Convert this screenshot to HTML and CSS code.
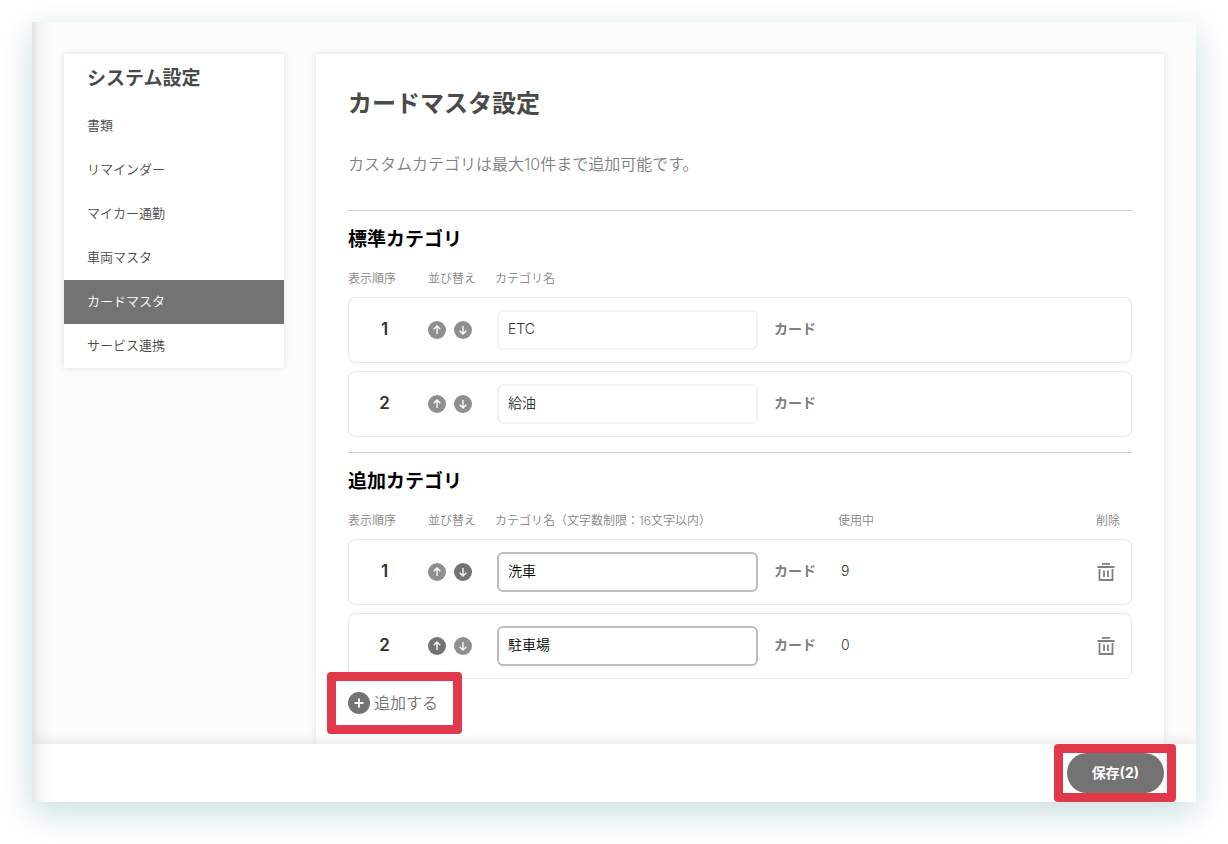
FILE: index.html
```html
<!DOCTYPE html>
<html lang="ja">
<head>
<meta charset="utf-8">
<meta name="viewport" content="width=device-width, initial-scale=1">
<title>カードマスタ設定</title>
<link rel="stylesheet" href="styles.css">
</head>
<body>
<svg class="sprite" aria-hidden="true">
  <symbol id="up" viewBox="0 0 18 18"><circle cx="9" cy="9" r="9" fill="currentColor"/><path d="M9 13V5.3M5.7 8.2 9 5l3.300 3.200" fill="none" stroke="#fff" stroke-width="1.300"/></symbol>
  <symbol id="down" viewBox="0 0 18 18"><circle cx="9" cy="9" r="9" fill="currentColor"/><path d="M9 5v7.700M5.700 9.800 9 13l3.300-3.200" fill="none" stroke="#fff" stroke-width="1.300"/></symbol>
  <symbol id="trash" viewBox="0 0 18 20"><path d="M5 1.800h8M0.500 5h17M2.500 7v11h13V7M7 8.500v6.500M11 8.500v6.500" fill="none" stroke="currentColor" stroke-width="1.800"/></symbol>
</svg>
<div class="window">
  <div class="body">
    <nav class="side" aria-labelledby="side-title">
      <h2 class="side-title" id="side-title">システム設定</h2>
      <ul class="menu">
        <li><a class="item" href="#">書類</a></li>
        <li><a class="item" href="#">リマインダー</a></li>
        <li><a class="item" href="#">マイカー通勤</a></li>
        <li><a class="item" href="#">車両マスタ</a></li>
        <li><a class="item active" href="#" aria-current="page">カードマスタ</a></li>
        <li><a class="item" href="#">サービス連携</a></li>
      </ul>
    </nav>
    <main class="panel">
      <h1 class="title">カードマスタ設定</h1>
      <p class="lead">カスタムカテゴリは最大10件まで追加可能です。</p>

      <section class="group">
        <h2 class="heading">標準カテゴリ</h2>
        <table class="grid">
          <thead><tr><th class="c-no">表示順序</th><th class="c-sort">並び替え</th><th class="c-name">カテゴリ名</th><th class="c-unit"></th><th></th><th class="c-del"></th></tr></thead>
          <tbody>
            <tr>
              <td class="no">1</td>
              <td><div class="sort"><button class="arrow" disabled aria-label="上へ"><svg><use href="#up"/></svg></button><button class="arrow" disabled aria-label="下へ"><svg><use href="#down"/></svg></button></div></td>
              <td class="name"><input class="field" type="text" value="ETC" aria-label="カテゴリ名" disabled></td>
              <td class="unit">カード</td><td></td><td></td>
            </tr>
            <tr>
              <td class="no">2</td>
              <td><div class="sort"><button class="arrow" disabled aria-label="上へ"><svg><use href="#up"/></svg></button><button class="arrow" disabled aria-label="下へ"><svg><use href="#down"/></svg></button></div></td>
              <td class="name"><input class="field" type="text" value="給油" aria-label="カテゴリ名" disabled></td>
              <td class="unit">カード</td><td></td><td></td>
            </tr>
          </tbody>
        </table>
      </section>

      <section class="group">
        <h2 class="heading">追加カテゴリ</h2>
        <table class="grid">
          <thead><tr><th class="c-no">表示順序</th><th class="c-sort">並び替え</th><th class="c-name">カテゴリ名（文字数制限：16文字以内）</th><th class="c-unit"></th><th>使用中</th><th class="c-del">削除</th></tr></thead>
          <tbody>
            <tr>
              <td class="no">1</td>
              <td><div class="sort"><button class="arrow" disabled aria-label="上へ"><svg><use href="#up"/></svg></button><button class="arrow" aria-label="下へ"><svg><use href="#down"/></svg></button></div></td>
              <td class="name"><input class="field" type="text" value="洗車" maxlength="16" aria-label="カテゴリ名"></td>
              <td class="unit">カード</td><td class="used">9</td>
              <td><button class="trash" aria-label="削除"><svg><use href="#trash"/></svg></button></td>
            </tr>
            <tr>
              <td class="no">2</td>
              <td><div class="sort"><button class="arrow" aria-label="上へ"><svg><use href="#up"/></svg></button><button class="arrow" disabled aria-label="下へ"><svg><use href="#down"/></svg></button></div></td>
              <td class="name"><input class="field" type="text" value="駐車場" maxlength="16" aria-label="カテゴリ名"></td>
              <td class="unit">カード</td><td class="used">0</td>
              <td><button class="trash" aria-label="削除"><svg><use href="#trash"/></svg></button></td>
            </tr>
          </tbody>
        </table>
        <button class="add marked"><svg viewBox="0 0 22 22" aria-hidden="true"><circle cx="11" cy="11" r="11" fill="#737373"/><path d="M11 6.500v9M6.500 11h9" stroke="#fff" stroke-width="1.800"/></svg>追加する</button>
      </section>
    </main>
  </div>
  <footer class="bar"><button class="save marked">保存(2)</button></footer>
</div>
</body>
</html>
```
FILE: styles.css
```css
* { box-sizing: border-box; }

body {
  margin: 0;
  padding: 22px 32px 42px;
  background: #fff;
  color: #4a4a4a;
  font-family: Inter, "Noto Sans CJK JP", sans-serif;
  font-weight: 350;
  font-size: 14px;
}

button, input { font: inherit; }
button { border: 0; padding: 0; background: none; color: inherit; cursor: pointer; }
.sprite { display: none; }

.window {
  position: relative;
  display: flex;
  flex-direction: column;
  min-height: calc(100vh - 64px);
  background: #fcfcfc;
  box-shadow: 0 10px 32px rgba(31, 119, 135, 0.25);
}

/* soft inner shade along the left edge */
.window::after {
  content: "";
  position: absolute;
  inset: 0 auto 0 0;
  width: 20px;
  background: linear-gradient(to right, rgba(0, 0, 0, 0.1), rgba(0, 0, 0, 0.03) 40%, transparent);
  pointer-events: none;
}

.body {
  flex: 1;
  display: flex;
  align-items: stretch;
  gap: 32px;
  padding: 32px 32px 0;
}

.side, .panel {
  background: #fff;
  box-shadow: 0 0 6px rgba(0, 0, 0, 0.12);
}

.side { flex: 0 0 220px; align-self: flex-start; }
.side-title { margin: 0; padding: 0 23px; font-size: 19px; line-height: 50px; }
.menu { list-style: none; margin: 0; padding: 0; }
.item {
  display: block;
  padding: 0 23px 2px;
  font-size: 13px;
  line-height: 42px;
  color: #4a4a4a;
  text-decoration: none;
}
.item.active { background: #737373; color: #fff; }

.panel { flex: 1; min-width: 0; padding: 32px; padding-bottom: 10px; }
.title { margin: 0; font-size: 24px; line-height: 36px; }
.lead { margin: 30px 0 34px; font-size: 16px; line-height: 24px; color: #808080; }

.group { border-top: 1px solid #ccc; padding: 15px 0 7px; }
.heading { margin: 0 0 7px; font-size: 19px; line-height: 28px; color: #000; }

.grid {
  width: 100%;
  table-layout: fixed;
  border-collapse: separate;
  border-spacing: 0 8px;
}
.grid th {
  padding: 0;
  height: 20px;
  font-size: 12px;
  font-weight: inherit;
  line-height: 20px;
  text-align: left;
  white-space: nowrap;
  color: #858585;
}
.c-no { width: 80px; }
.c-sort { width: 67px; }
.c-name { width: 279px; }
.c-unit { width: 64px; }
.c-del { width: 36px; }

.grid td {
  height: 66px;
  padding: 0;
  border: solid #e8e8e8;
  border-width: 1px 0;
  vertical-align: middle;
}
.grid td:first-child { border-left-width: 1px; border-radius: 8px 0 0 8px; }
.grid td:last-child { border-right-width: 1px; border-radius: 0 8px 8px 0; }
.grid .no { padding: 0 8px 2px 0; text-align: center; font-size: 17px; font-weight: 600; color: #333; }
.grid .name { padding: 0 16px 0 2px; }
.grid .unit { padding-bottom: 4px; font-weight: 700; color: #808080; }
.grid .used { padding: 0 0 4px 3px; color: #333; }

.sort { display: flex; gap: 8px; }
.arrow { width: 18px; height: 18px; color: #737373; }
.arrow:disabled { color: #8f8f8f; cursor: default; }
.arrow svg { display: block; width: 18px; height: 18px; }

.field {
  display: block;
  width: 100%;
  height: 40px;
  padding: 0 9px 4px;
  border: 2px solid #bdbdbd;
  border-radius: 6px;
  background: #fff;
  color: #000;
}
.field:disabled { border-color: #f2f2f2; color: #333; }

.trash { display: block; width: 18px; height: 20px; margin-left: 1px; color: #808080; }
.trash svg { display: block; width: 18px; height: 20px; }

.add {
  display: flex;
  align-items: center;
  gap: 4px;
  margin-top: 4px;
  font-size: 16px;
  line-height: 24px;
  color: #737373;
}
.add svg { width: 22px; height: 22px; }

/* red callout frame drawn round a control */
.marked { position: relative; }
.marked::after {
  content: "";
  position: absolute;
  inset: -9px -12px -9px -13px;
  border: 9px solid #e1384b;
  border-radius: 4px;
  pointer-events: none;
}
.add.marked::after { inset: -19px -24px -19px -21px; }

.bar {
  position: relative;
  display: flex;
  justify-content: flex-end;
  padding: 9px 32px;
  background: #fff;
  box-shadow: 0 -2px 12px rgba(0, 0, 0, 0.1);
  clip-path: inset(-14px 0 0 0);
}
.save {
  height: 40px;
  padding: 0 25px 2px;
  border-radius: 20px;
  background: #737373;
  color: #fff;
  font-weight: 700;
}
```
